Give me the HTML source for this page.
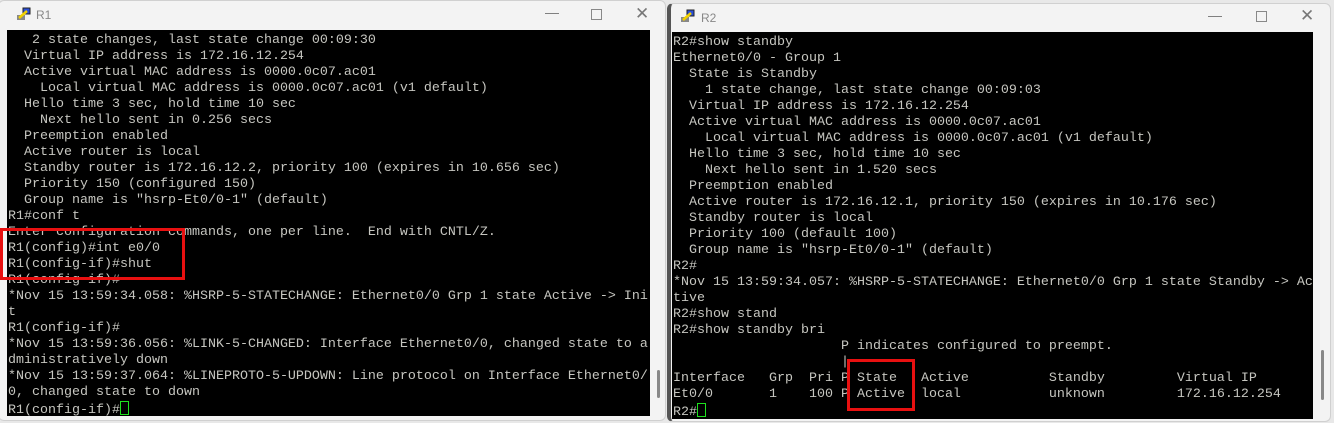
<!DOCTYPE html>
<html><head><meta charset="utf-8"><style>
*{margin:0;padding:0;box-sizing:border-box}
body{width:1334px;height:423px;overflow:hidden;background:#e8e8e8;position:relative;font-family:"Liberation Sans",sans-serif}
.win{position:absolute;background:#f3f3f3;border:1px solid #d0d0d0}
.title{position:absolute;font-size:12px;color:#888}
.term{position:absolute;background:#000}
pre{position:absolute;font-family:"Liberation Mono",monospace;font-size:13.33px;line-height:16px;color:#c6c6c0;white-space:pre}
.ctl{position:absolute;color:#777;font-size:14px}
.red{position:absolute;border:3px solid #e81010}
.cur{display:inline-block;width:9px;height:14px;border:1.5px solid #1ee01e;vertical-align:-2px}
.ico{position:absolute;width:16px;height:14px}
.sb{position:absolute;width:3px;background:#888;border-radius:2px}
</style></head><body>
<div class="win" style="left:-2px;top:0;width:668px;height:421px;border-radius:6px"></div>
<svg class="ico" style="left:16px;top:7px" viewBox="0 0 16 14"><rect x="1" y="8" width="8" height="5" fill="#888"/><rect x="7" y="1" width="7" height="6" fill="#2a4fd8" stroke="#222" stroke-width="1"/><path d="M3 11 L11 4" stroke="#f0d000" stroke-width="2.5"/></svg>
<div class="title" style="left:36px;top:8px">R1</div>
<div class="ctl" style="left:545px;top:4px">—</div>
<div class="ctl" style="left:591px;top:3px;width:11px;height:11px;border:1px solid #888;top:9px"></div>
<div class="ctl" style="left:635px;top:4px;font-size:17px">✕</div>
<div class="term" style="left:7px;top:30px;width:643px;height:386px"></div>
<div class="sb" style="left:657px;top:370px;height:28px"></div>
<pre style="left:8px;top:33px">   2 state changes, last state change 00:09:30
  Virtual IP address is 172.16.12.254
  Active virtual MAC address is 0000.0c07.ac01
    Local virtual MAC address is 0000.0c07.ac01 (v1 default)
  Hello time 3 sec, hold time 10 sec
    Next hello sent in 0.256 secs
  Preemption enabled
  Active router is local
  Standby router is 172.16.12.2, priority 100 (expires in 10.656 sec)
  Priority 150 (configured 150)
  Group name is "hsrp-Et0/0-1" (default)
R1#conf t
Enter configuration commands, one per line.  End with CNTL/Z.
R1(config)#int e0/0
R1(config-if)#shut
R1(config-if)#
*Nov 15 13:59:34.058: %HSRP-5-STATECHANGE: Ethernet0/0 Grp 1 state Active -> Ini
t
R1(config-if)#
*Nov 15 13:59:36.056: %LINK-5-CHANGED: Interface Ethernet0/0, changed state to a
dministratively down
*Nov 15 13:59:37.064: %LINEPROTO-5-UPDOWN: Line protocol on Interface Ethernet0/
0, changed state to down
R1(config-if)#<span class="cur"></span></pre>
<div class="red" style="left:0;top:228px;width:185px;height:52px"></div>

<div class="win" style="left:667px;top:3px;width:664px;height:419px;border-radius:6px;border-left:4px solid #555"></div>
<svg class="ico" style="left:680px;top:9px" viewBox="0 0 16 14"><rect x="1" y="8" width="8" height="5" fill="#888"/><rect x="7" y="1" width="7" height="6" fill="#2a4fd8" stroke="#222" stroke-width="1"/><path d="M3 11 L11 4" stroke="#f0d000" stroke-width="2.5"/></svg>
<div class="title" style="left:701px;top:11px">R2</div>
<div class="ctl" style="left:1208px;top:7px">—</div>
<div class="ctl" style="left:1256px;top:11px;width:11px;height:11px;border:1px solid #888"></div>
<div class="ctl" style="left:1300px;top:6px;font-size:17px">✕</div>
<div class="term" style="left:672px;top:32px;width:641px;height:387px"></div>
<div class="sb" style="left:1321px;top:350px;height:50px"></div>
<pre style="left:673px;top:35px">R2#show standby
Ethernet0/0 - Group 1
  State is Standby
    1 state change, last state change 00:09:03
  Virtual IP address is 172.16.12.254
  Active virtual MAC address is 0000.0c07.ac01
    Local virtual MAC address is 0000.0c07.ac01 (v1 default)
  Hello time 3 sec, hold time 10 sec
    Next hello sent in 1.520 secs
  Preemption enabled
  Active router is 172.16.12.1, priority 150 (expires in 10.176 sec)
  Standby router is local
  Priority 100 (default 100)
  Group name is "hsrp-Et0/0-1" (default)
R2#
*Nov 15 13:59:34.057: %HSRP-5-STATECHANGE: Ethernet0/0 Grp 1 state Standby -> Ac
tive
R2#show stand
R2#show standby bri
                     P indicates configured to preempt.
                     |
Interface   Grp  Pri P State   Active          Standby         Virtual IP
Et0/0       1    100 P Active  local           unknown         172.16.12.254
R2#<span class="cur"></span></pre>
<div class="red" style="left:847px;top:359px;width:68px;height:52px"></div>
</body></html>
